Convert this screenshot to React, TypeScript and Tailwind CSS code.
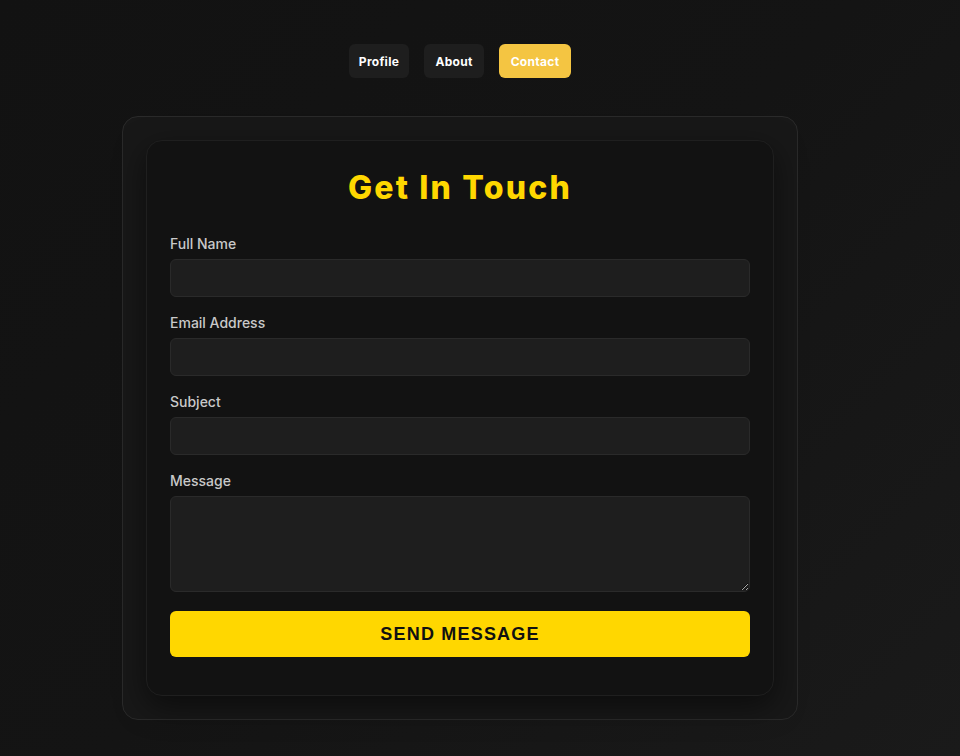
import React from "react";

const font = { fontFamily: "Inter, 'Noto Sans', sans-serif" };

function Field({ label, area }: { label: string; area?: boolean }) {
  return (
    <div className={area ? "" : "mb-[15px]"}>
      <label className="block text-[14px] leading-[21px] font-medium text-[#c9c9c9] mb-[5px]">{label}</label>
      {area ? (
        <textarea className="block w-full h-[96px] rounded-[6px] bg-[#1e1e1e] border border-[#2a2a2a] outline-none" />
      ) : (
        <input className="block w-full h-[38px] rounded-[6px] bg-[#1e1e1e] border border-[#2a2a2a] outline-none" />
      )}
    </div>
  );
}

export default function App() {
  return (
    <div
      className="min-h-[756px] w-full bg-[linear-gradient(135deg,#121212_0%,#141414_50%,#1a1a1a_100%)] flex flex-col items-center pr-[40px] pt-[44px] pb-[37px]"
      style={font}
    >
      <nav className="flex gap-[15px]">
        <button className="h-[34px] w-[60px] pt-[2px] rounded-[6px] bg-[#1e1e1e] text-white text-[12px] font-bold tracking-[0.3px]">Profile</button>
        <button className="h-[34px] w-[60px] pt-[2px] rounded-[6px] bg-[#1e1e1e] text-white text-[12px] font-bold tracking-[0.3px]">About</button>
        <button className="h-[34px] w-[72px] pt-[2px] rounded-[6px] bg-[#f4c542] text-white text-[12px] font-bold tracking-[0.3px]">Contact</button>
      </nav>
      <div className="mt-[38px] w-[676px] rounded-[16px] border border-[#2a2a2a] bg-[#181818] p-[23px]">
        <div className="rounded-[16px] border border-[#1f1f1f] bg-[#121212] px-[23px] pt-[23px] pb-[38px] shadow-[0_10px_30px_rgba(0,0,0,0.5)]">
          <h2 className="text-center text-[32px] leading-[48px] font-extrabold tracking-[2.2px] text-[#ffd700] mb-[21px]">Get In Touch</h2>
          <Field label="Full Name" />
          <Field label="Email Address" />
          <Field label="Subject" />
          <Field label="Message" area />
          <button
            className="mt-[19px] w-full h-[46px] rounded-[6px] bg-[#ffd700] text-[#111] text-[18px] font-bold tracking-[1.2px]"
            style={{ fontFamily: "'Liberation Sans', Arial, sans-serif" }}
          >
            SEND MESSAGE
          </button>
        </div>
      </div>
    </div>
  );
}
